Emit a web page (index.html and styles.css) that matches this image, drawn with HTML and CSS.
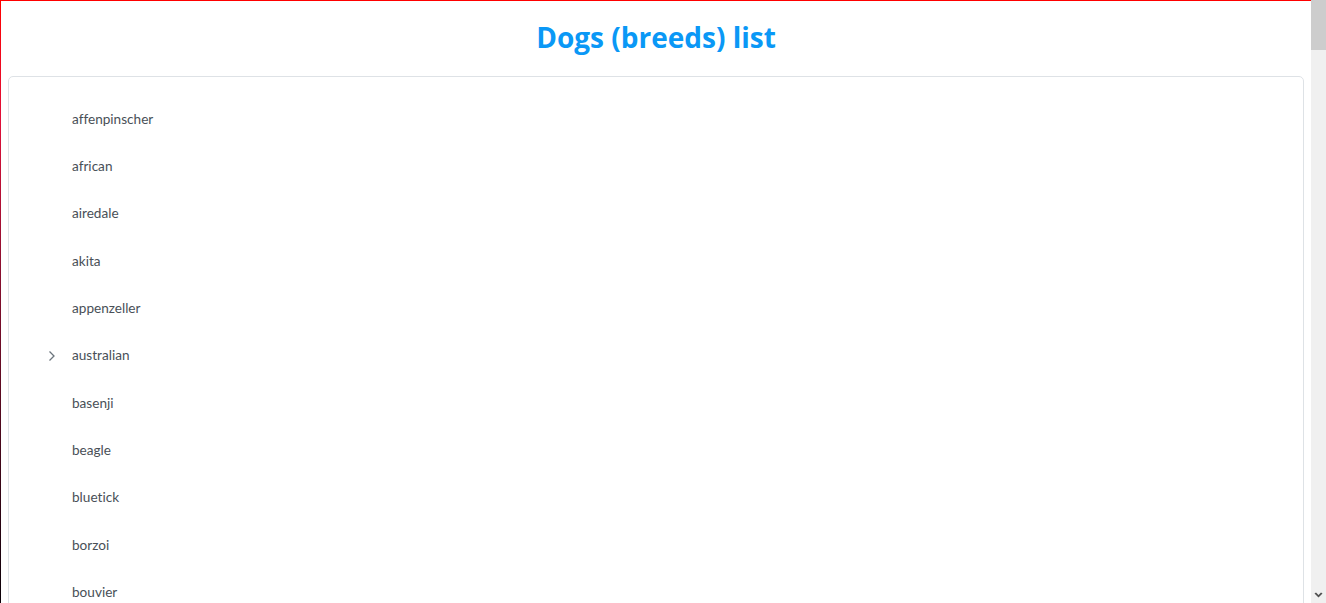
FILE: index.html
```html
<!DOCTYPE html>
<html lang="en">
<head>
<meta charset="utf-8">
<title>Dogs (breeds) list</title>
<link rel="stylesheet" href="styles.css">
</head>
<body>
<div class="frame-top"></div>
<div class="frame-left"></div>
<div class="scrollbar">
  <div class="scroll-thumb"></div>
  <div class="scroll-track"></div>
  <div class="scroll-down">
    <svg width="9" height="7" viewBox="0 0 9 7"><path d="M0.5 1.5 L2 0.5 L4.5 3 L7 0.5 L8.5 1.5 L4.5 5.5 Z" fill="#505050"/></svg>
  </div>
</div>
<header class="header"><h1 class="title">Dogs (breeds) list</h1></header>
<main class="tree">
  <ul class="tree-list">
    <li class="node"><span class="toggler"></span><span class="label">affenpinscher</span></li>
    <li class="node"><span class="toggler"></span><span class="label">african</span></li>
    <li class="node"><span class="toggler"></span><span class="label">airedale</span></li>
    <li class="node"><span class="toggler"></span><span class="label">akita</span></li>
    <li class="node"><span class="toggler"></span><span class="label">appenzeller</span></li>
    <li class="node"><span class="toggler"><svg class="chev" width="10" height="12" viewBox="0 0 10 12"><path d="M2.5 1.5 L7 6 L2.5 10.5" fill="none" stroke="#6c757d" stroke-width="1.3"/></svg></span><span class="label">australian</span></li>
    <li class="node"><span class="toggler"></span><span class="label">basenji</span></li>
    <li class="node"><span class="toggler"></span><span class="label">beagle</span></li>
    <li class="node"><span class="toggler"></span><span class="label">bluetick</span></li>
    <li class="node"><span class="toggler"></span><span class="label">borzoi</span></li>
    <li class="node"><span class="toggler"></span><span class="label">bouvier</span></li>
  </ul>
</main>
</body>
</html>
```
FILE: styles.css
```css
html { background: #fff; overflow: hidden; height: 100%; }
body {
  margin: 0 22px 0 8px;
  font-family: "Lato", sans-serif;
  color: #495057;
}
.frame-top {
  position: fixed; top: 0; left: 0; right: 15px; height: 1px;
  background: #ff0000; z-index: 10;
}
.frame-left {
  position: fixed; top: 0; left: 0; bottom: 0; width: 1px;
  background: linear-gradient(#ff0000, #e0103a 20%, #8a1030 45%, #0a0008);
  z-index: 10;
}
.scrollbar {
  position: fixed; top: 0; right: 0; bottom: 0; width: 15px;
  background: #f0f0f0;
  display: flex; flex-direction: column;
  z-index: 10;
}
.scroll-thumb { height: 50px; background: #cdcdcd; }
.scroll-track { flex: 1; }
.scroll-down {
  height: 15px;
  display: flex; align-items: center; justify-content: center;
}
.scroll-down svg { display: block; }
.header {
  height: 76px;
  display: flex; align-items: center; justify-content: center;
}
.title {
  margin: 0 0 2px;
  font-family: "Open Sans", sans-serif;
  font-weight: 700;
  font-size: 28px;
  color: #0a98f6;
}
.tree {
  border: 1px solid #dee2e6;
  border-radius: 5px;
  padding: 19px 0 18px 0;
}
.tree-list { list-style: none; margin: 0; padding: 0; }
.node {
  height: 47.3px;
  display: flex; align-items: center;
  padding-left: 33px;
  font-size: 13.6px;
  font-variant-ligatures: none;
}
.toggler {
  width: 30px; height: 20px;
  display: flex; align-items: center;
}
.chev { display: block; margin-left: 5px; }
.label { line-height: 1; }
```
